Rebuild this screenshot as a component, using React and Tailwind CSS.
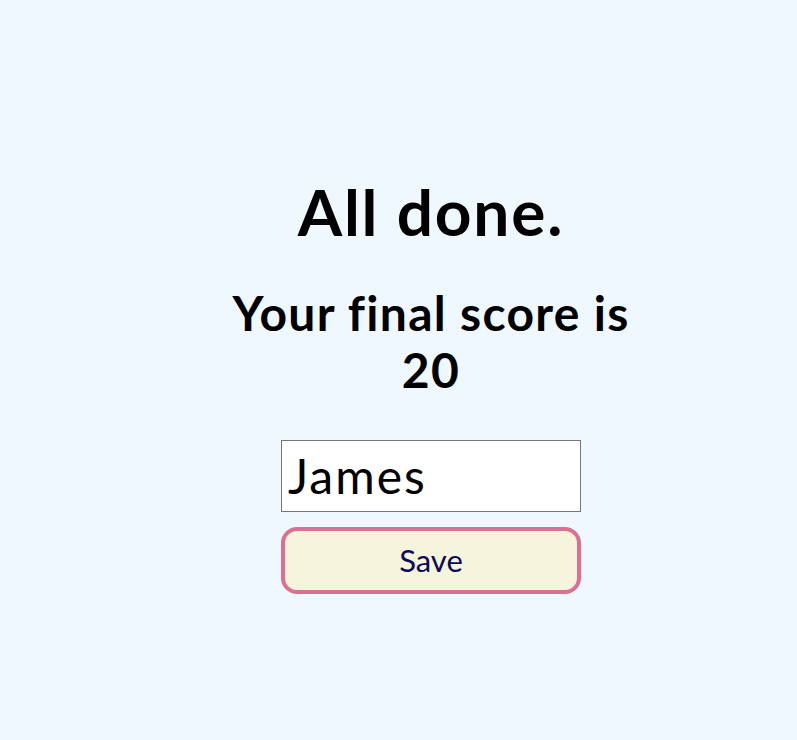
import React, { useState } from "react";

export default function App() {
  const [initials, setInitials] = useState("James");

  return (
    <div
      className="min-h-screen bg-[#f0f8ff] text-black [font-variant-ligatures:none]"
      style={{ fontFamily: "Lato, 'Open Sans', sans-serif" }}
    >
      <div className="flex justify-center pl-[65px] pt-[174px]">
        <div className="w-[400px] flex flex-col items-center text-center">
          {/* Result */}
          <h1 className="text-[64px] font-bold leading-[1.2] tracking-[1.8px]">All done.</h1>
          <h2 className="mt-[33px] text-[48px] font-bold leading-[1.2] tracking-[1.3px]">
            Your final score is 20
          </h2>

          {/* Save form */}
          <input
            type="text"
            value={initials}
            onChange={(e) => setInitials(e.target.value)}
            className="mt-[41px] w-[300px] h-[72px] bg-white border border-[#767676] px-[6px] text-[48px] tracking-[2px] leading-none outline-none"
          />
          <button className="mt-[15px] w-[300px] h-[67px] bg-[#f5f5dc] border-4 border-[#db7093] rounded-[16px] text-[31px] text-[#0a0a5c]">
            Save
          </button>
        </div>
      </div>
    </div>
  );
}
